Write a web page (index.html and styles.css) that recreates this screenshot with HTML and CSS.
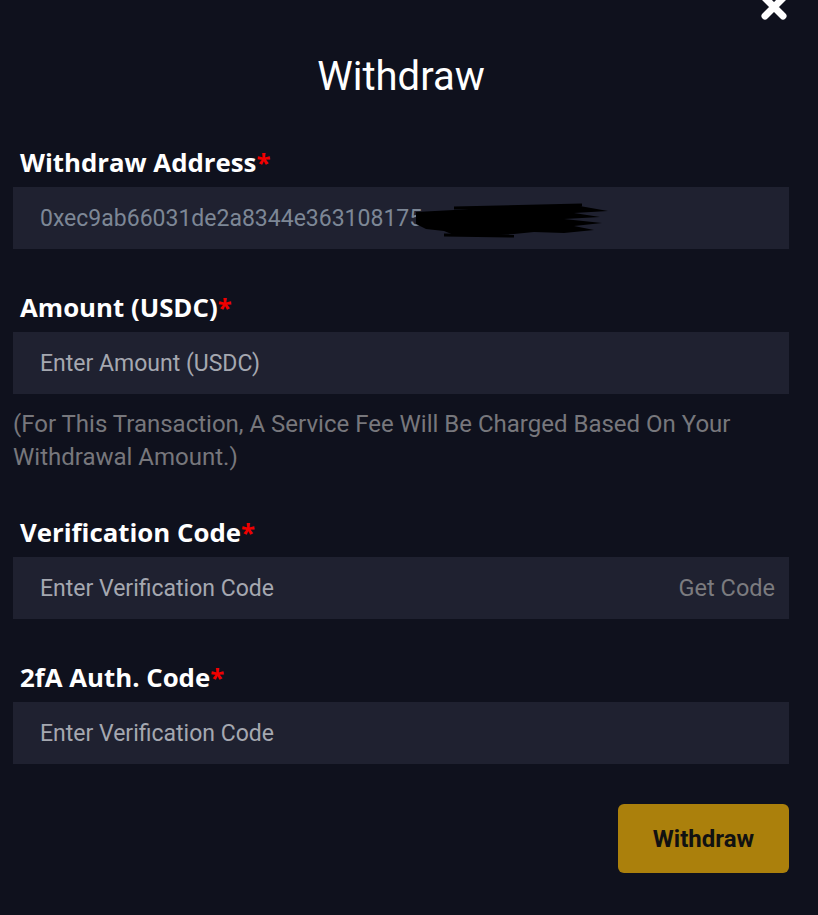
FILE: index.html
```html
<!DOCTYPE html>
<html lang="en">
<head>
<meta charset="UTF-8">
<meta name="viewport" content="width=device-width, initial-scale=1.0">
<title>Withdraw</title>
<link rel="stylesheet" href="styles.css">
</head>
<body>

<div class="modal">

    <button class="close-btn" aria-label="Close">
        <svg width="28" height="28" viewBox="0 0 28 28">
            <path d="M5 5 L23 23 M23 5 L5 23" stroke="#fff" stroke-width="7" stroke-linecap="round"/>
        </svg>
    </button>

    <h1 class="title">Withdraw</h1>

    <div class="field">
        <label class="label">Withdraw Address<span class="req">*</span></label>
        <div class="input filled">
            <span>0xec9ab66031de2a8344e363108175</span>
            <!-- redacted part of the address -->
            <svg class="scribble" width="196" height="36" viewBox="0 0 196 36">
                <path d="M2 10 L40 8 L70 6 L110 4 L160 3 L194 9 L160 11 L186 15 L150 17 L188 21 L160 24 L180 28 L150 31 L120 30 L100 32 L70 34 L40 33 L30 29 L12 27 L2 22 Z" fill="#000"/>
                <path d="M40 6 L168 3" stroke="#000" stroke-width="3"/>
                <path d="M30 33 L100 34" stroke="#000" stroke-width="3"/>
            </svg>
        </div>
    </div>

    <div class="field">
        <label class="label">Amount (USDC)<span class="req">*</span></label>
        <div class="input">Enter Amount (USDC)</div>
        <p class="hint">(For This Transaction, A Service Fee Will Be Charged Based On Your Withdrawal Amount.)</p>
    </div>

    <div class="field">
        <label class="label">Verification Code<span class="req">*</span></label>
        <div class="input">
            <span>Enter Verification Code</span>
            <span class="get-code">Get Code</span>
        </div>
    </div>

    <div class="field">
        <label class="label">2fA Auth. Code<span class="req">*</span></label>
        <div class="input">Enter Verification Code</div>
    </div>

    <div class="actions">
        <button class="submit-btn">Withdraw</button>
    </div>

</div>

</body>
</html>
```

FILE: styles.css
```css
*{
    box-sizing:border-box;
}

body{
    margin:0;
    min-height:100vh;
    background:#0f111d;
    font-family:Roboto, "Liberation Sans", sans-serif;
    color:#fff;
}

.modal{
    position:relative;
    padding:54px 29px 40px 13px;
}

.close-btn{
    position:absolute;
    top:-7px;
    right:30px;
    padding:0;
    border:none;
    background:none;
    cursor:pointer;
}

.title{
    margin:0 0 47px;
    text-align:center;
    font-size:40px;
    line-height:46px;
    font-weight:400;
}

.field{
    margin-bottom:43px;
}

.label{
    display:block;
    padding-left:7px;
    margin-bottom:10px;
    font-family:"Open Sans", Lato, sans-serif;
    font-size:25.8px;
    line-height:30px;
    font-weight:700;
}

.req{
    color:#f00000;
}

.input{
    height:62px;
    background:#1f2130;
    padding:0 27px;
    display:flex;
    align-items:center;
    justify-content:space-between;
    font-size:23px;
    color:#a5a8b0;
}

.input.filled{
    justify-content:flex-start;
    color:#7d8796;
}

.scribble{
    margin-left:-8px;
    margin-top:4px;
}

.get-code{
    color:#7b7b7f;
    margin-right:-13px;
    font-size:23.5px;
}

.hint{
    margin:14px 0 0;
    font-size:24px;
    line-height:33px;
    color:#77777c;
}

.actions{
    display:flex;
    justify-content:flex-end;
    margin-top:-3px;
}

.submit-btn{
    width:171px;
    height:69px;
    border:none;
    border-radius:6px;
    background:#ab800c;
    color:#111;
    font-family:Roboto, sans-serif;
    font-size:24px;
    font-weight:700;
    cursor:pointer;
}
```
